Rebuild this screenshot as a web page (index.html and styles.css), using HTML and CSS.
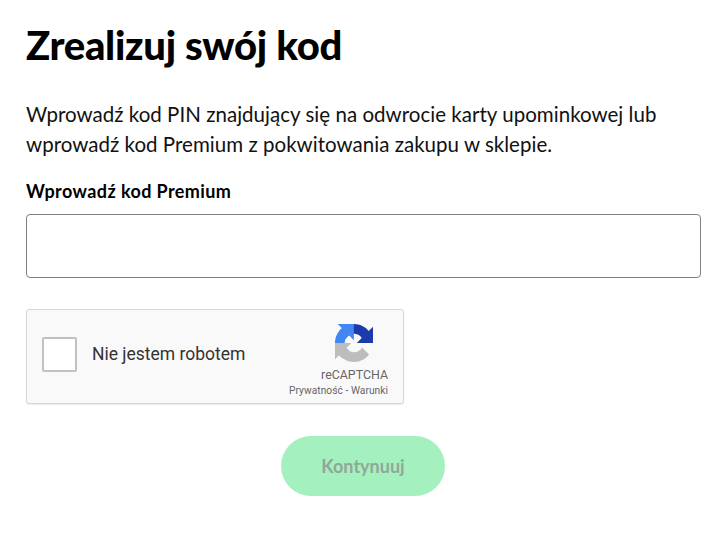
FILE: index.html
```html
<!DOCTYPE html>
<html lang="pl">
<head>
    <meta charset="UTF-8">
    <meta name="viewport" content="width=device-width, initial-scale=1.0">
    <title>Zrealizuj swój kod</title>
    <link rel="stylesheet" href="styles.css">
</head>
<body>
    <div class="content">
        <h1>Zrealizuj swój kod</h1>
        <p class="intro">Wprowadź kod PIN znajdujący się na odwrocie karty upominkowej lub wprowadź kod Premium z pokwitowania zakupu w sklepie.</p>
        <label class="code-label" for="code">Wprowadź kod Premium</label>
        <input type="text" id="code" class="code-input">

        <div class="captcha">
            <div class="captcha-left">
                <span class="captcha-box"></span>
                <span class="captcha-text">Nie jestem robotem</span>
            </div>
            <div class="captcha-right">
                <svg class="captcha-logo" viewBox="0 0 64 64">
                    <path d="M64 31.955l-.033-1.37V4.687l-7.16 7.16C50.948 4.674 42.033.093 32.05.093c-10.4 0-19.622 4.96-25.458 12.64l11.736 11.86a15.55 15.55 0 0 1 4.754-5.334c2.05-1.6 4.952-2.906 8.968-2.906.485 0 .86.057 1.135.163 4.976.393 9.288 3.14 11.828 7.124l-8.307 8.307c10.522-.04 22.4-.066 27.295.005" fill="#1c3aa9"/>
                    <path d="M31.862.094l-1.37.033H4.594l7.16 7.16C4.58 13.147 0 22.06 0 32.046c0 10.4 4.96 19.622 12.64 25.458l11.86-11.736a15.55 15.55 0 0 1-5.334-4.754c-1.6-2.05-2.906-4.952-2.906-8.968 0-.485.057-.86.163-1.135.393-4.976 3.14-9.288 7.124-11.828l8.307 8.307c-.04-10.522-.066-22.4.005-27.295" fill="#4285f4"/>
                    <path d="M.001 32.045l.033 1.37v25.898l7.16-7.16c5.86 7.173 14.774 11.754 24.76 11.754 10.4 0 19.622-4.96 25.458-12.64L45.676 39.41a15.55 15.55 0 0 1-4.754 5.334c-2.05 1.6-4.952 2.906-8.968 2.906-.485 0-.86-.057-1.135-.163-4.976-.393-9.288-3.14-11.828-7.124l8.307-8.307c-10.522.04-22.4.066-27.295-.005" fill="#bdbdbd"/>
                </svg>
                <span class="captcha-brand">reCAPTCHA</span>
                <span class="captcha-links">Prywatność - Warunki</span>
            </div>
        </div>

        <div class="actions">
            <button class="submit" disabled>Kontynuuj</button>
        </div>
    </div>
</body>
</html>
```

FILE: styles.css
```css
body {
    margin: 0;
    background-color: #ffffff;
    color: #000000;
    font-family: 'Lato', sans-serif;
}

.content {
    width: 675px;
    padding: 21px 0 0 26px;
}

h1 {
    margin: 0 0 30px;
    font-size: 40px;
    line-height: 48px;
    font-weight: 900;
    letter-spacing: -0.3px;
    color: #000000;
}

.intro {
    margin: 0 0 21px;
    font-size: 20.5px;
    line-height: 30px;
    letter-spacing: 0.03px;
    color: #111111;
}

.code-label {
    display: block;
    margin-bottom: 12px;
    font-size: 18px;
    line-height: 22px;
    font-weight: 700;
    letter-spacing: 0.4px;
}

.code-input {
    display: block;
    width: 100%;
    height: 64px;
    box-sizing: border-box;
    border: 1px solid #808080;
    border-radius: 4px;
    background-color: #ffffff;
}

.captcha {
    display: flex;
    justify-content: space-between;
    box-sizing: border-box;
    width: 378px;
    height: 95px;
    margin-top: 31px;
    border: 1px solid #d6d6d6;
    border-radius: 3px;
    background-color: #f9f9f9;
    box-shadow: 0 1px 1px rgba(0, 0, 0, 0.08);
    font-family: 'Roboto', sans-serif;
}

.captcha-left {
    display: flex;
    align-items: center;
    gap: 15px;
    padding: 0 0 5px 15px;
}

.captcha-box {
    width: 31px;
    height: 31px;
    border: 2px solid #c1c1c1;
    border-radius: 2px;
    background-color: #ffffff;
}

.captcha-text {
    font-size: 17.5px;
    color: #333333;
}

.captcha-right {
    display: flex;
    flex-direction: column;
    align-items: flex-end;
    padding: 14px 15px 0 0;
}

.captcha-logo {
    width: 38px;
    height: 38px;
    margin-right: 15px;
}

.captcha-brand {
    margin-top: 6px;
    font-size: 12.4px;
    line-height: 14px;
    color: #666666;
}

.captcha-links {
    margin-top: 3px;
    font-size: 10.2px;
    line-height: 12px;
    letter-spacing: 0.05px;
    color: #666666;
}

.actions {
    display: flex;
    justify-content: center;
    margin-top: 32px;
    padding-right: 1px;
}

.submit {
    width: 164px;
    height: 60px;
    border: none;
    border-radius: 30px;
    background-color: #a5f0bf;
    color: #8fa897;
    font-family: 'Lato', sans-serif;
    font-size: 18px;
    font-weight: 700;
}
```
